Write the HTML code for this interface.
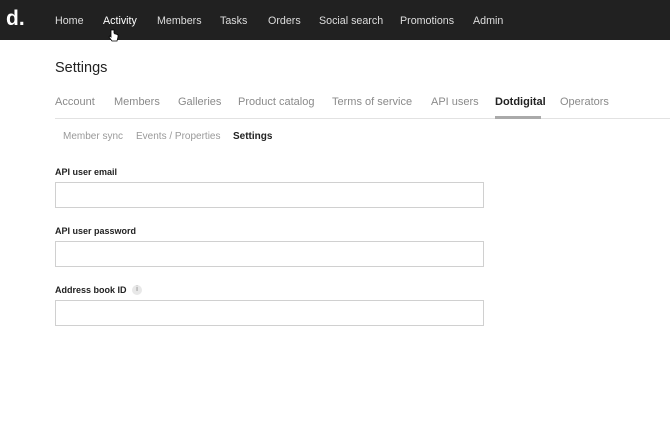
<!DOCTYPE html>
<html><head><style>
*{margin:0;padding:0;box-sizing:border-box}
body{width:670px;height:421px;background:#fff;font-family:"Liberation Sans",sans-serif;position:relative;overflow:hidden}
.nav{position:absolute;left:0;top:0;width:670px;height:40px;background:#212121}
.a{position:absolute;white-space:nowrap}
.n{color:#ddd;font-size:10.7px;top:15px}
.t{color:#8a8a8a;font-size:11px;top:96px}
.s{color:#999;font-size:10px;top:131px}
.l{color:#222;font-size:9px;font-weight:bold}
.in{position:absolute;left:55px;width:429px;height:26px;border:1px solid #d0d0d0;background:#fff}
</style></head><body>
<div class="nav"></div>
<div class="a" style="left:6px;top:7px;color:#fff;font-size:21px;font-weight:bold">d.</div>
<div class="a n" style="left:55px">Home</div>
<div class="a n" style="left:103px;color:#fff">Activity</div>
<div class="a n" style="left:157px">Members</div>
<div class="a n" style="left:220px">Tasks</div>
<div class="a n" style="left:268px">Orders</div>
<div class="a n" style="left:319px">Social search</div>
<div class="a n" style="left:400px">Promotions</div>
<div class="a n" style="left:473px">Admin</div>
<svg class="a" style="left:108px;top:29px" width="12" height="13" viewBox="0 0 12 13"><path d="M3 1v7l-1-1-1 1 3 4h5l1-4V6l-2-1-1 0V5L6 4V1z" fill="#fff" stroke="#000" stroke-width=".8"/></svg>
<div class="a" style="left:55px;top:60px;font-size:14.5px;color:#222">Settings</div>
<div class="a t" style="left:55px">Account</div>
<div class="a t" style="left:114px">Members</div>
<div class="a t" style="left:178px">Galleries</div>
<div class="a t" style="left:238px">Product catalog</div>
<div class="a t" style="left:332px">Terms of service</div>
<div class="a t" style="left:431px">API users</div>
<div class="a t" style="left:495px;color:#222;font-weight:bold">Dotdigital</div>
<div class="a t" style="left:560px">Operators</div>
<div class="a" style="left:55px;top:118px;width:615px;height:1px;background:#e2e2e2"></div>
<div class="a" style="left:495px;top:116px;width:46px;height:3px;background:#aaa"></div>
<div class="a s" style="left:63px">Member sync</div>
<div class="a s" style="left:136px">Events / Properties</div>
<div class="a s" style="left:233px;color:#222;font-weight:bold">Settings</div>
<div class="a l" style="left:55px;top:167px">API user email</div>
<div class="in" style="top:182px"></div>
<div class="a l" style="left:55px;top:226px">API user password</div>
<div class="in" style="top:241px"></div>
<div class="a l" style="left:55px;top:285px">Address book ID</div>
<div class="a" style="left:132px;top:285px;width:10px;height:10px;border-radius:50%;background:#e8e8e8;color:#777;font-size:7px;text-align:center;line-height:10px">i</div>
<div class="in" style="top:300px"></div>
</body></html>
